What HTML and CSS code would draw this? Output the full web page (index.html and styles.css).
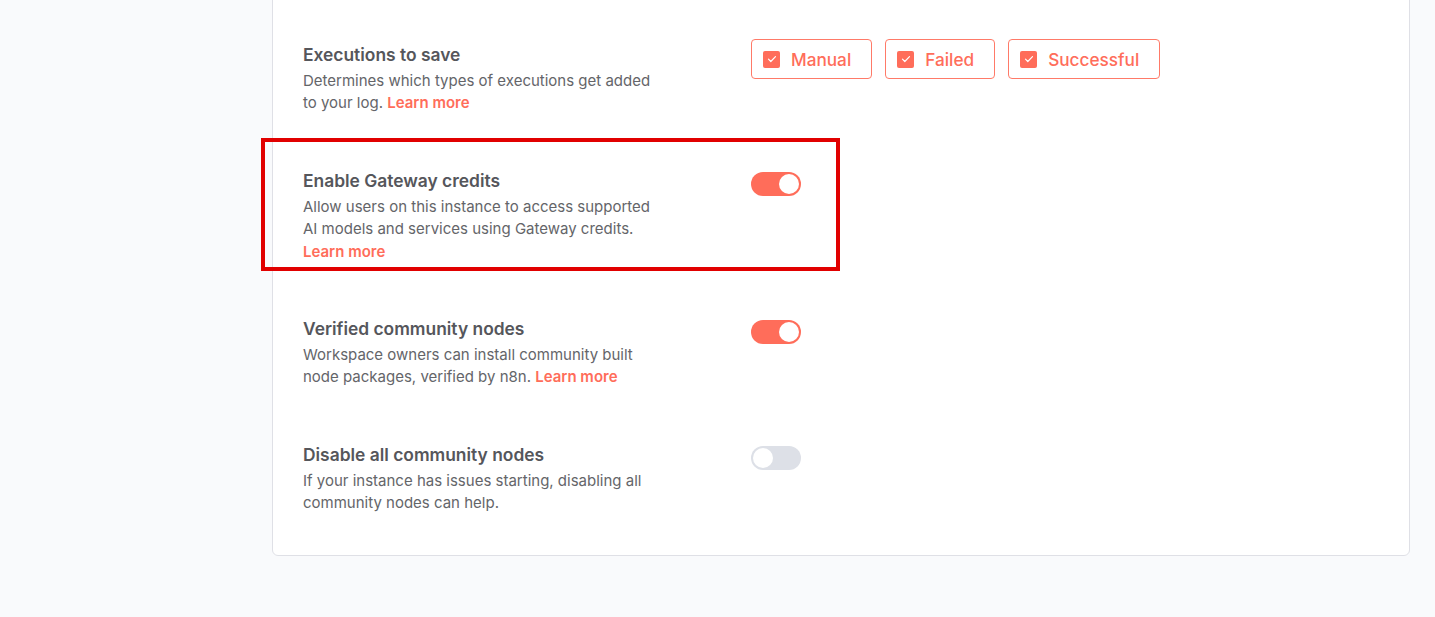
FILE: index.html
```html
<!DOCTYPE html>
<html lang="en">
<head>
    <meta charset="UTF-8">
    <meta name="viewport" content="width=device-width, initial-scale=1.0">
    <title>Settings</title>
    <link rel="stylesheet" href="styles.css">
</head>
<body>
    <div class="page">
        <!-- Settings Card -->
        <div class="settings-card">
            <!-- Executions to save -->
            <div class="setting-row">
                <div class="setting-info">
                    <div class="setting-title">Executions to save</div>
                    <div class="setting-desc">Determines which types of executions get added to your log. <a href="#" class="learn-more">Learn more</a></div>
                </div>
                <div class="checkbox-group">
                    <label class="check-btn"><span class="check-box"><svg viewBox="0 0 16 16" width="16" height="16"><path d="M4.5 8.2l2.3 2.3 4.7-4.8" fill="none" stroke="#fff" stroke-width="1.2" stroke-linecap="round" stroke-linejoin="round"/></svg></span>Manual</label>
                    <label class="check-btn"><span class="check-box"><svg viewBox="0 0 16 16" width="16" height="16"><path d="M4.5 8.2l2.3 2.3 4.7-4.8" fill="none" stroke="#fff" stroke-width="1.2" stroke-linecap="round" stroke-linejoin="round"/></svg></span>Failed</label>
                    <label class="check-btn"><span class="check-box"><svg viewBox="0 0 16 16" width="16" height="16"><path d="M4.5 8.2l2.3 2.3 4.7-4.8" fill="none" stroke="#fff" stroke-width="1.2" stroke-linecap="round" stroke-linejoin="round"/></svg></span>Successful</label>
                </div>
            </div>
            <!-- Gateway credits -->
            <div class="setting-row highlighted">
                <div class="setting-info">
                    <div class="setting-title">Enable Gateway credits</div>
                    <div class="setting-desc">Allow users on this instance to access supported AI models and services using Gateway credits.<br><a href="#" class="learn-more">Learn more</a></div>
                </div>
                <div class="toggle on"><span class="knob"></span></div>
                <div class="highlight-frame"></div>
            </div>
            <!-- Verified community nodes -->
            <div class="setting-row">
                <div class="setting-info">
                    <div class="setting-title">Verified community nodes</div>
                    <div class="setting-desc">Workspace owners can install community built node packages, verified by n8n. <a href="#" class="learn-more">Learn more</a></div>
                </div>
                <div class="toggle on"><span class="knob"></span></div>
            </div>
            <!-- Disable community nodes -->
            <div class="setting-row">
                <div class="setting-info">
                    <div class="setting-title">Disable all community nodes</div>
                    <div class="setting-desc">If your instance has issues starting, disabling all community nodes can help.</div>
                </div>
                <div class="toggle"><span class="knob"></span></div>
            </div>
        </div>
    </div>
</body>
</html>
```

FILE: styles.css
```css
/* Global Styling */
body {
    margin: 0;
    background-color: #f9fafc;
    font-family: Inter, "Noto Sans", sans-serif;
    overflow: hidden;
}
.page {
    padding: 0 25px 0 272px;
}
/* Settings Card */
.settings-card {
    margin-top: -10px;
    background-color: #ffffff;
    border: 1px solid #dfe0e6;
    border-radius: 6px;
    padding: 54px 30px 40px 30px;
    display: flex;
    flex-direction: column;
    gap: 56px;
}
/* Setting Row */
.setting-row {
    display: flex;
    align-items: flex-start;
    position: relative;
}
.setting-info {
    width: 448px;
    flex-shrink: 0;
}
.setting-title {
    font-size: 17.4px;
    font-weight: 600;
    line-height: 20px;
    color: #55565b;
}
.setting-desc {
    margin-top: 5px;
    max-width: 356px;
    font-size: 15px;
    line-height: 22.4px;
    color: #646569;
}
.learn-more {
    color: #ff6d5a;
    font-weight: 600;
    text-decoration: none;
}
/* Checkbox Buttons */
.checkbox-group {
    display: flex;
    gap: 13px;
    margin-top: -6px;
}
.check-btn {
    display: flex;
    align-items: center;
    gap: 11px;
    height: 38px;
    padding: 0 20px 0 11px;
    border: 1px solid #ff7a68;
    border-radius: 4px;
    color: #ff6d5a;
    font-size: 17.2px;
    font-weight: 500;
}
.check-box {
    width: 17px;
    height: 17px;
    border-radius: 2px;
    background-color: #ff6d5a;
    display: flex;
    align-items: center;
    justify-content: center;
}
/* Toggle */
.toggle {
    width: 50px;
    height: 24px;
    margin-top: 1px;
    border-radius: 12px;
    background-color: #dde0e7;
    display: flex;
    align-items: center;
    padding: 2px;
    box-sizing: border-box;
}
.toggle .knob {
    width: 20px;
    height: 20px;
    border-radius: 50%;
    background-color: #ffffff;
}
.toggle.on {
    background-color: #ff6d5a;
    justify-content: flex-end;
}
/* Highlight frame drawn over the row */
.highlight-frame {
    position: absolute;
    left: -42px;
    top: -33px;
    width: 571px;
    height: 125px;
    border: 4px solid #e10000;
    pointer-events: none;
}
```
